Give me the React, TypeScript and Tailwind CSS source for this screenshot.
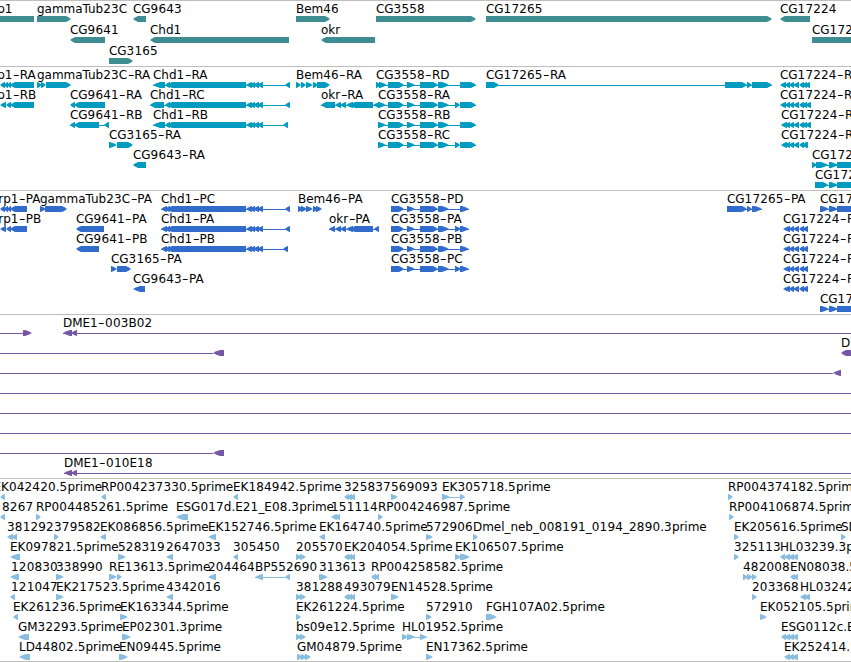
import React from "react";

type Seg = [number, number];
// label x, label text, strand, exons, optional extent of the connecting line
type Feature = {
  x: number;
  name: string;
  dir: "L" | "R";
  segs: Seg[];
  line?: Seg;
};

const f = (x: number, name: string, dir: "L" | "R", segs: Seg[], line?: Seg): Feature => ({
  x,
  name,
  dir,
  segs,
  line,
});

const genes: Feature[][] = [
  [
    f(-16, "Rrp1", "L", [[-20, 34]]),
    f(37, "gammaTub23C", "R", [[37, 71]]),
    f(133, "CG9643", "L", [[133, 146]]),
    f(296, "Bem46", "R", [[296, 330]]),
    f(376, "CG3558", "R", [[376, 476]]),
    f(486, "CG17265", "R", [[486, 772]]),
    f(780, "CG17224", "L", [[780, 810]]),
  ],
  [
    f(70, "CG9641", "L", [[70, 105]]),
    f(150, "Chd1", "L", [[150, 289]]),
    f(321, "okr", "L", [[321, 375]]),
    f(812, "CG17223", "R", [[812, 880]]),
  ],
  [f(109, "CG3165", "R", [[109, 133]])],
];

const chdTail = (end: number): Seg[] => [
  [246, 252],
  [250, 255],
  [253, 259],
  [257, 263],
  [end - 5, end],
];
const cgMid: Seg[] = [
  [388, 404],
  [407, 415],
  [420, 438],
  [438, 449],
];
const cg24 = (a: number, b: number): Seg[] => [
  [a, a + 6],
  [785, 790],
  [789, 794],
  [793, 799],
  [799, 804],
  [802, 807],
  [805, b],
];

const transcripts: Feature[][] = [
  [
    f(-16, "Rrp1-RA", "L", [[0, 5], [4, 8], [7, 11], [10, 34]]),
    f(37, "gammaTub23C-RA", "R", [[37, 42], [41, 46], [46, 71]]),
    f(153, "Chd1-RA", "L", [[153, 165], [165, 170], [167, 246], ...chdTail(290)], [153, 290]),
    f(296, "Bem46-RA", "R", [[296, 301], [301, 306], [306, 313], [313, 318], [317, 330]]),
    f(376, "CG3558-RD", "R", [[376, 381], [379, 387], ...cgMid, [460, 476]], [376, 476]),
    f(486, "CG17265-RA", "R", [[486, 499], [725, 747], [747, 752], [752, 772]], [486, 772]),
    f(780, "CG17224-RA", "L", cg24(780, 810)),
  ],
  [
    f(-16, "Rrp1-RB", "L", [[0, 6], [6, 11], [10, 34]]),
    f(70, "CG9641-RA", "L", [[70, 75], [74, 105]]),
    f(150, "Chd1-RC", "L", [[150, 164], [165, 170], [167, 246], ...chdTail(290)], [150, 290]),
    f(321, "okr-RA", "L", [[321, 335], [335, 341], [340, 346], [346, 353], [350, 373], [373, 380]], [321, 380]),
    f(378, "CG3558-RA", "R", [[378, 386], ...cgMid, [455, 460], [460, 476]], [378, 476]),
    f(780, "CG17224-RB", "L", cg24(780, 811)),
  ],
  [
    f(70, "CG9641-RB", "L", [[70, 75], [74, 99], [104, 109]], [70, 109]),
    f(153, "Chd1-RB", "L", [[153, 165], [165, 170], [167, 246], ...chdTail(288)], [153, 288]),
    f(378, "CG3558-RB", "R", [[378, 386], ...cgMid, [460, 476]], [378, 476]),
    f(781, "CG17224-RC", "L", cg24(781, 811)),
  ],
  [
    f(109, "CG3165-RA", "R", [[109, 117], [117, 133]]),
    f(378, "CG3558-RC", "R", [[378, 386], ...cgMid, [455, 460], [460, 476]], [378, 476]),
    f(781, "CG17224-RD", "L", cg24(781, 808)),
  ],
  [
    f(133, "CG9643-RA", "L", [[133, 146]]),
    f(812, "CG17223-RA", "R", [[812, 817], [816, 828], [829, 838], [837, 880]], [812, 851]),
  ],
  [f(815, "CG17223-RB", "R", [[815, 828], [829, 838], [837, 880]], [815, 851])],
];

const chdP: Seg[] = [[161, 167], [165, 170], [167, 246]];
const cgP: Seg[] = [[391, 404], ...cgMid.slice(1)];
const cg24P: Seg[] = [[783, 790], [789, 794], [793, 799], [799, 804], [802, 808]];

const proteins: Feature[][] = [
  [
    f(-10, "Rrp1-PA", "L", [[0, 5], [4, 8], [7, 11], [10, 27]]),
    f(40, "gammaTub23C-PA", "R", [[40, 46], [45, 67]]),
    f(161, "Chd1-PC", "L", [...chdP, ...chdTail(290)], [161, 290]),
    f(298, "Bem46-PA", "R", [[298, 303], [301, 307], [306, 313], [313, 318], [316, 322]]),
    f(391, "CG3558-PD", "R", [...cgP, [460, 469]], [391, 469]),
    f(727, "CG17265-PA", "R", [[727, 747], [747, 752], [752, 762]], [727, 762]),
    f(820, "CG17223-PA", "R", [[820, 829], [829, 838], [837, 880]], [820, 851]),
  ],
  [
    f(-10, "Rrp1-PB", "L", [[0, 6], [6, 11], [10, 27]]),
    f(76, "CG9641-PA", "L", [[76, 104]]),
    f(161, "Chd1-PA", "L", [...chdP, ...chdTail(290)], [161, 290]),
    f(329, "okr-PA", "L", [[329, 335], [335, 341], [340, 346], [346, 353], [350, 373], [374, 379]], [329, 379]),
    f(391, "CG3558-PA", "R", [...cgP, [455, 461], [460, 469]], [391, 469]),
    f(783, "CG17224-PA", "L", cg24P),
  ],
  [
    f(76, "CG9641-PB", "L", [[76, 99]]),
    f(161, "Chd1-PB", "L", [...chdP, ...chdTail(288)], [161, 288]),
    f(391, "CG3558-PB", "R", [...cgP, [460, 469]], [391, 469]),
    f(783, "CG17224-PB", "L", cg24P),
  ],
  [
    f(111, "CG3165-PA", "R", [[111, 117], [117, 131]]),
    f(391, "CG3558-PC", "R", [...cgP, [455, 461], [460, 469]], [391, 469]),
    f(783, "CG17224-PC", "L", cg24P),
  ],
  [f(133, "CG9643-PA", "L", [[133, 145]]), f(783, "CG17224-PD", "L", cg24P)],
  [f(820, "CG17223-PB", "R", [[820, 829], [829, 838], [837, 880]], [820, 851])],
];

const clones: Feature[][] = [
  [
    f(0, "", "R", [[23, 32]], [0, 23]),
    f(63, "DME1-003B02", "L", [[63, 72], [71, 77]], [63, 851]),
  ],
  [f(0, "", "L", [[213, 224]], [0, 213]), f(841, "DME1-021F04", "L", [[841, 880]])],
  [f(0, "", "L", [[833, 841]], [0, 833])],
  [f(0, "", "L", [], [0, 851])],
  [f(0, "", "L", [], [0, 851])],
  [f(0, "", "L", [], [0, 851])],
  [f(0, "", "L", [[213, 224]], [0, 213])],
  [f(64, "DME1-010E18", "L", [[64, 72], [71, 77]], [64, 851])],
];

const ests: Feature[][] = [
  [
    f(-6.5, "EK042420.5prime", "L", [[0, 5]]),
    f(101, "RP004237330.5prime", "L", [[101, 106]]),
    f(233, "EK184942.5prime", "L", [[233, 238]]),
    f(344, "325837", "L", [[344, 349], [347, 352], [350, 355]]),
    f(391, "569093", "R", [[391, 398]]),
    f(442, "EK305718.5prime", "R", [[442, 450], [460, 465]], [442, 465]),
    f(728, "RP004374182.5prime", "R", [[728, 733]]),
  ],
  [
    f(2, "8267", "L", [[0, 5]]),
    f(36, "RP004485261.5prime", "R", [[36, 41]]),
    f(176, "ESG017d.E21_E08.3prime", "L", [[176, 188]]),
    f(331, "151114", "L", [[331, 337], [335, 340]]),
    f(378, "RP004246987.5prime", "R", [[378, 383]]),
    f(729, "RP004106874.5prime", "R", [[729, 734]]),
  ],
  [
    f(7, "381292", "L", [[7, 13], [11, 17]]),
    f(54, "379582", "R", [[54, 59]]),
    f(100, "EK086856.5prime", "L", [[100, 106]]),
    f(208, "EK152746.5prime", "L", [[208, 216]]),
    f(319, "EK164740.5prime", "L", [[319, 325]]),
    f(426, "572906", "R", [[426, 433]]),
    f(473, "Dmel_neb_008191_0194_2890.3prime", "R", [[473, 478]]),
    f(734, "EK205616.5prime", "R", [[734, 739]]),
    f(841, "SD02026.5prime", "R", [[841, 846]]),
  ],
  [
    f(10, "EK097821.5prime", "L", [[10, 20]]),
    f(118, "528319", "R", [[118, 126]]),
    f(166, "2647033", "L", [[166, 173]]),
    f(233, "305450", "L", [[233, 238]]),
    f(296, "205570", "R", [[296, 302], [300, 306]]),
    f(344, "EK204054.5prime", "L", [[344, 349], [347, 352], [350, 355]]),
    f(455, "EK106507.5prime", "R", [[455, 461], [460, 470]]),
    f(734, "325113", "R", [[734, 739]]),
    f(780, "HL03239.3prime", "L", [[780, 785], [784, 790], [788, 794], [792, 798]]),
  ],
  [
    f(11, "120830", "L", [[10, 19]]),
    f(56, "338990", "R", [[56, 64]]),
    f(109, "RE13613.5prime", "R", [[109, 117], [117, 122]]),
    f(208, "204464", "L", [[208, 216]]),
    f(255, "BP552690", "L", [[255, 263], [285, 290]], [255, 290]),
    f(319, "313613", "R", [[319, 328]]),
    f(371, "RP004258582.5prime", "L", [[371, 376], [374, 379]]),
    f(743, "482008", "R", [[743, 748], [747, 753], [752, 757]]),
    f(790, "EN08038.5prime", "L", [[790, 795], [793, 798]]),
  ],
  [
    f(11, "121047", "L", [[10, 15]]),
    f(56, "EK217523.5prime", "R", [[56, 64]]),
    f(166, "4342016", "L", [[166, 173]]),
    f(296, "381288", "R", [[296, 302], [300, 306]]),
    f(344, "493079", "L", [[344, 349], [347, 352], [350, 355]]),
    f(391, "EN14528.5prime", "R", [[391, 399]]),
    f(752, "203368", "R", [[752, 757]]),
    f(800, "HL03242.5prime", "L", [[800, 806], [803, 810]]),
  ],
  [
    f(13, "EK261236.5prime", "L", [[13, 18]]),
    f(120, "EK163344.5prime", "R", [[120, 128]]),
    f(296, "EK261224.5prime", "R", [[296, 301]]),
    f(426, "572910", "R", [[426, 432]]),
    f(486, "FGH107A02.5prime", "R", [[486, 497]]),
    f(760, "EK052105.5prime", "R", [[760, 767]]),
  ],
  [
    f(18, "GM32293.5prime", "L", [[18, 29]]),
    f(122, "EP02301.3prime", "R", [[122, 131]]),
    f(296, "bs09e12.5prime", "R", [[296, 302], [300, 306]]),
    f(402, "HL01952.5prime", "R", [[402, 408], [407, 415], [420, 427]], [402, 427]),
    f(781, "ESG0112c.B07", "L", [[781, 786], [784, 790], [788, 794], [792, 798]]),
  ],
  [
    f(19, "LD44802.5prime", "L", [[19, 30]]),
    f(119, "EN09445.5prime", "R", [[119, 128]]),
    f(297, "GM04879.5prime", "R", [[297, 303], [301, 307], [305, 311]]),
    f(426, "EN17362.5prime", "R", [[426, 433]]),
    f(784, "EK252414.5prime", "L", [[784, 790], [788, 794], [792, 798]]),
  ],
];

function arrow([a, b]: Seg, dir: "L" | "R"): string {
  const w = b - a;
  const head = w > 12 ? 5 : Math.min(7, w - 0.5);
  const mid = head * 0.5;
  return dir === "R"
    ? `${a},0 ${b - head},0 ${b - mid},1.2 ${b},2.9 ${b - mid},4.8 ${b - head},6 ${a},6`
    : `${b},0 ${a + head},0 ${a + mid},1.2 ${a},2.9 ${a + mid},4.8 ${a + head},6 ${b},6`;
}

function Row({ features, height }: { features: Feature[]; height: string }) {
  return (
    <div className={`relative w-full shrink-0 pt-[15px] ${height}`}>
      <svg width={851} height={6} className="block fill-current">
        {features.map((ft, i) => (
          <g key={i}>
            {ft.line && <rect x={ft.line[0]} y={3} width={ft.line[1] - ft.line[0]} height={1} />}
            {ft.segs.map((s, j) => (
              <polygon key={j} points={arrow(s, ft.dir)} />
            ))}
          </g>
        ))}
      </svg>
      {features.map((ft, i) => (
        <span
          key={i}
          className="absolute top-0 whitespace-pre text-[12px] leading-4 tracking-[-0.04px] text-black"
          style={{ left: ft.x }}
        >
          {ft.name.split(/(\d+|-)/).map((part, j) =>
            part === "-" ? (
              <span key={j} className="inline-block w-[7.2px] text-center">
                <span className="inline-block scale-x-150">-</span>
              </span>
            ) : j % 2 ? (
              <span key={j} className="tracking-[0.18px]">
                {part}
              </span>
            ) : (
              part
            ),
          )}
        </span>
      ))}
    </div>
  );
}

function Track({
  rows,
  size,
  color,
  rowHeight = "h-5",
}: {
  rows: Feature[][];
  size: string;
  color: string;
  rowHeight?: string;
}) {
  return (
    <section className={`flex shrink-0 flex-col overflow-hidden border-t border-[#bebebe] ${size} ${color}`}>
      {rows.map((r, i) => (
        <Row key={i} features={r} height={rowHeight} />
      ))}
    </section>
  );
}

export default function App() {
  return (
    <main className="flex h-[662px] w-[851px] flex-col overflow-hidden bg-white font-['DejaVu_Sans',sans-serif]">
      <Track rows={genes} size="h-[66px]" color="text-[#408c93]" rowHeight="h-[21px]" />
      <Track rows={transcripts} size="h-[124px]" color="text-[#009bbf]" />
      <Track rows={proteins} size="h-[124px]" color="text-[#316ccc]" />
      <Track rows={clones} size="h-[164px]" color="text-[#7557a6]" />
      <Track rows={ests} size="h-[183px]" color="text-[#89bddf]" />
      <div className="h-px shrink-0 bg-[#bebebe]" />
    </main>
  );
}
